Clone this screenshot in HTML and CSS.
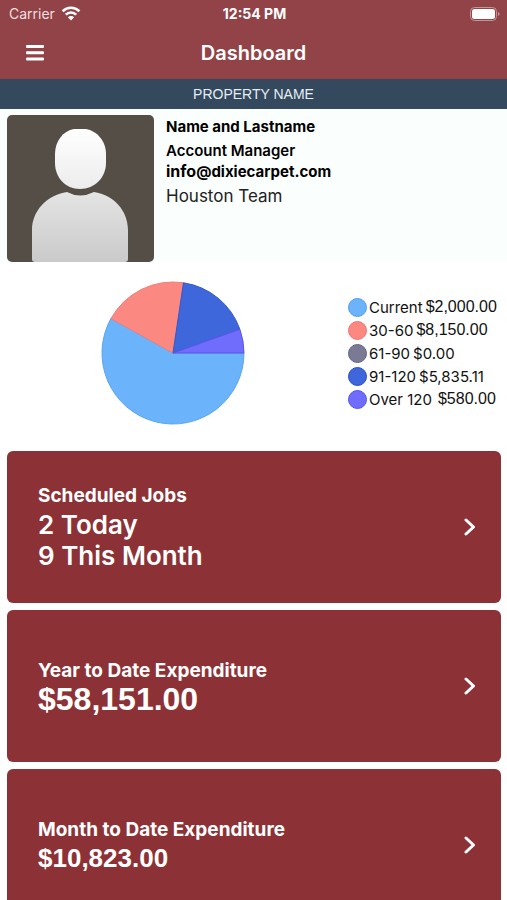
FILE: index.html
```html
<!DOCTYPE html>
<html lang="en">
<head>
  <meta charset="UTF-8" />
  <meta name="viewport" content="width=device-width, initial-scale=1.0" />
  <title>Dashboard</title>
  <link rel="stylesheet" href="styles.css">
</head>
<body>
  <header class="header">
    <div class="status">
      <div class="carrier">
        <span>Carrier</span>
        <svg width="20" height="15" viewBox="0 0 20 15" fill="none" stroke="#fff" stroke-width="2.6">
          <path d="M1.6 5.2a12 12 0 0 1 16.8 0" />
          <path d="M4.8 8.6a7.4 7.4 0 0 1 10.4 0" />
          <path d="M10 14.4L6.9 11.2a4.4 4.4 0 0 1 6.2 0z" fill="#fff" stroke="none" />
        </svg>
      </div>
      <span class="time">12:54 PM</span>
      <svg class="battery" width="30" height="14" viewBox="0 0 30 14">
        <rect x="0.5" y="0.5" width="26" height="13" rx="4" fill="none" stroke="#c49699" />
        <rect x="2" y="2" width="23" height="10" rx="2.5" fill="#fff" />
        <path d="M28 5v4q1.6-.6 1.6-2T28 5z" fill="#c49699" />
      </svg>
    </div>
    <div class="navbar">
      <button type="button" class="menu" aria-label="Menu">
        <svg width="18" height="16" viewBox="0 0 18 16" fill="#fff">
          <rect width="18" height="3" rx="1" />
          <rect y="6.3" width="18" height="3" rx="1" />
          <rect y="12.6" width="18" height="3" rx="1" />
        </svg>
      </button>
      <h1>Dashboard</h1>
    </div>
  </header>
  <div class="property">PROPERTY NAME</div>

  <main>
    <section class="profile">
      <svg class="avatar" viewBox="0 0 147 147">
        <defs>
          <linearGradient id="head" x1="0" y1="0" x2="0" y2="1">
            <stop offset="0" stop-color="#fff" />
            <stop offset="1" stop-color="#ececec" />
          </linearGradient>
          <linearGradient id="torso" x1="0" y1="0" x2="0" y2="1">
            <stop offset="0" stop-color="#e4e4e4" />
            <stop offset="1" stop-color="#cacaca" />
          </linearGradient>
        </defs>
        <rect width="147" height="147" fill="#544e47" />
        <path d="M67 14h12c11 2 20 12 20 25v9c0 14-11 26-26 26S48 62 48 48v-9c0-13 8-23 19-25z" fill="url(#head)" />
        <path d="M60 77q13 7 27 0c20 3 34 19 34 38v29q0 3-3 3H28q-3 0-3-3v-29c0-19 15-35 35-38z" fill="url(#torso)" />
      </svg>
      <div class="info">
        <p class="name">Name and Lastname</p>
        <p class="role">Account Manager</p>
        <a class="email" href="mailto:info@dixiecarpet.com"><span>info</span>@dixiecarpet.com</a>
        <p class="team">Houston Team</p>
      </div>
    </section>

    <section class="balance">
      <svg class="pie" viewBox="-72 -72 144 144">
        <path d="M0 0H71A71 71 0 1 1 -62.1 -34.4z" fill="#6bb3fb" stroke="#5ba5f0" />
        <path d="M0 0L-62.1 -34.4A71 71 0 0 1 10.5 -70.2z" fill="#fc8981" stroke="#ee7f7b" />
        <path d="M0 0L10.5 -70.2A71 71 0 0 1 66.9 -23.7z" fill="#3f67dc" stroke="#3457d0" />
        <path d="M0 0L66.9 -23.7A71 71 0 0 1 71 0z" fill="#706dfd" stroke="#5955e8" />
      </svg>
      <ul class="legend">
        <li><i class="dot current"></i>Current<b>$2,000.00</b></li>
        <li><i class="dot d30"></i>30-60<b>$8,150.00</b></li>
        <li><i class="dot d61"></i>61-90<b class="small">$0.00</b></li>
        <li><i class="dot d91"></i>91-120<b class="small">$5,835.11</b></li>
        <li><i class="dot over"></i>Over 120<b class="last">$580.00</b></li>
      </ul>
    </section>

    <section class="cards">
      <a class="card" href="#jobs">
        <div>
          <h2>Scheduled Jobs</h2>
          <p class="count">2 Today</p>
          <p class="count">9 This Month</p>
        </div>
        <svg width="12" height="18" viewBox="0 0 12 18"><path d="M2 2l7.5 7L2 16" /></svg>
      </a>
      <a class="card" href="#year">
        <div>
          <h2>Year to Date Expenditure</h2>
          <p class="amount big">$58,151.00</p>
        </div>
        <svg width="12" height="18" viewBox="0 0 12 18"><path d="M2 2l7.5 7L2 16" /></svg>
      </a>
      <a class="card" href="#month">
        <div>
          <h2>Month to Date Expenditure</h2>
          <p class="amount">$10,823.00</p>
        </div>
        <svg width="12" height="18" viewBox="0 0 12 18"><path d="M2 2l7.5 7L2 16" /></svg>
      </a>
    </section>
  </main>
</body>
</html>
```
FILE: styles.css
```css
* {
  box-sizing: border-box;
}
body {
  margin: 0;
  height: 100vh;
  display: flex;
  flex-direction: column;
  font-family: Inter, sans-serif;
  background: #fff;
  color: #111;
}
h1, h2, p, ul {
  margin: 0;
  padding: 0;
}
a {
  color: inherit;
  text-decoration: none;
}
.header {
  background: #914347;
  color: #fff;
}
.status {
  display: grid;
  grid-template-columns: 1fr auto 1fr;
  align-items: center;
  height: 27px;
  padding: 0 7px 0 9px;
  font-size: 14px;
}
.carrier {
  display: flex;
  align-items: center;
  gap: 6px;
  color: #f3dfe0;
}
.time {
  font-weight: 700;
}
.battery {
  justify-self: end;
}
.navbar {
  display: grid;
  grid-template-columns: 1fr auto 1fr;
  align-items: center;
  height: 52px;
  padding: 0 16px;
}
.menu {
  display: flex;
  justify-self: start;
  padding: 10px;
  border: none;
  background: none;
  cursor: pointer;
}
h1 {
  font-size: 20px;
  font-weight: 600;
}
.property {
  background: #34495d;
  color: #e6eef5;
  font: 14px/30px "Liberation Sans", Arial, sans-serif;
  text-align: center;
}
main {
  flex: 1;
  min-height: 0;
  overflow-y: auto;
  scrollbar-width: none;
}
.profile {
  display: flex;
  gap: 12px;
  padding: 6px 7px 0;
  background: #fafffe;
}
.avatar {
  flex: none;
  width: 147px;
  height: 147px;
  border-radius: 5px;
}
.info {
  font-size: 15px;
  font-weight: 700;
  color: #000;
}
.name {
  line-height: 24px;
}
.role {
  line-height: 24px;
  font-weight: 600;
}
.email {
  display: block;
  line-height: 16px;
}
.email span {
  font-size: 16px;
}
.team {
  padding-top: 4px;
  font-size: 17px;
  font-weight: 400;
  line-height: 24px;
  color: #222;
}
.balance {
  display: flex;
  align-items: center;
  justify-content: space-between;
  height: 189px;
  padding: 0 6px 7px 101px;
}
.pie {
  width: 144px;
  height: 144px;
}
.pie path {
  stroke-width: 1;
}
.legend {
  width: 153px;
  list-style: none;
}
.legend li {
  display: flex;
  align-items: center;
  height: 23px;
  font-size: 15px;
  white-space: nowrap;
}
.legend b {
  margin-left: 3px;
  font: 16px "Liberation Sans", Arial, sans-serif;
}
.legend .small {
  font: 15px Inter, sans-serif;
}
.legend .last {
  margin-left: 6px;
}
.dot {
  width: 19px;
  height: 19px;
  margin-right: 2px;
  border: 1px solid;
  border-radius: 50%;
}
.current {
  background: #6bb3fb;
  border-color: #4f9ff0;
}
.d30 {
  background: #fc8981;
  border-color: #f4716f;
}
.d61 {
  background: #7a7a94;
  border-color: #62627e;
}
.d91 {
  background: #3f67dc;
  border-color: #2748c8;
}
.over {
  background: #706dfd;
  border-color: #5450f0;
}
.cards {
  display: flex;
  flex-direction: column;
  gap: 7px;
  padding: 0 6px 7px 7px;
}
.card {
  display: flex;
  align-items: center;
  justify-content: space-between;
  height: 152px;
  padding: 0 25px 0 31px;
  border-radius: 6px;
  background: #8c3236;
  color: #fff;
}
.card svg {
  fill: none;
  stroke: #fff;
  stroke-width: 3;
  stroke-linecap: round;
  stroke-linejoin: round;
}
h2 {
  font-size: 19px;
  font-weight: 700;
  line-height: 26px;
}
.count {
  font-size: 26px;
  font-weight: 600;
  line-height: 31px;
}
.amount {
  font: bold 26px/30px "Liberation Sans", Arial, sans-serif;
}
.big {
  font-size: 32px;
}
```
